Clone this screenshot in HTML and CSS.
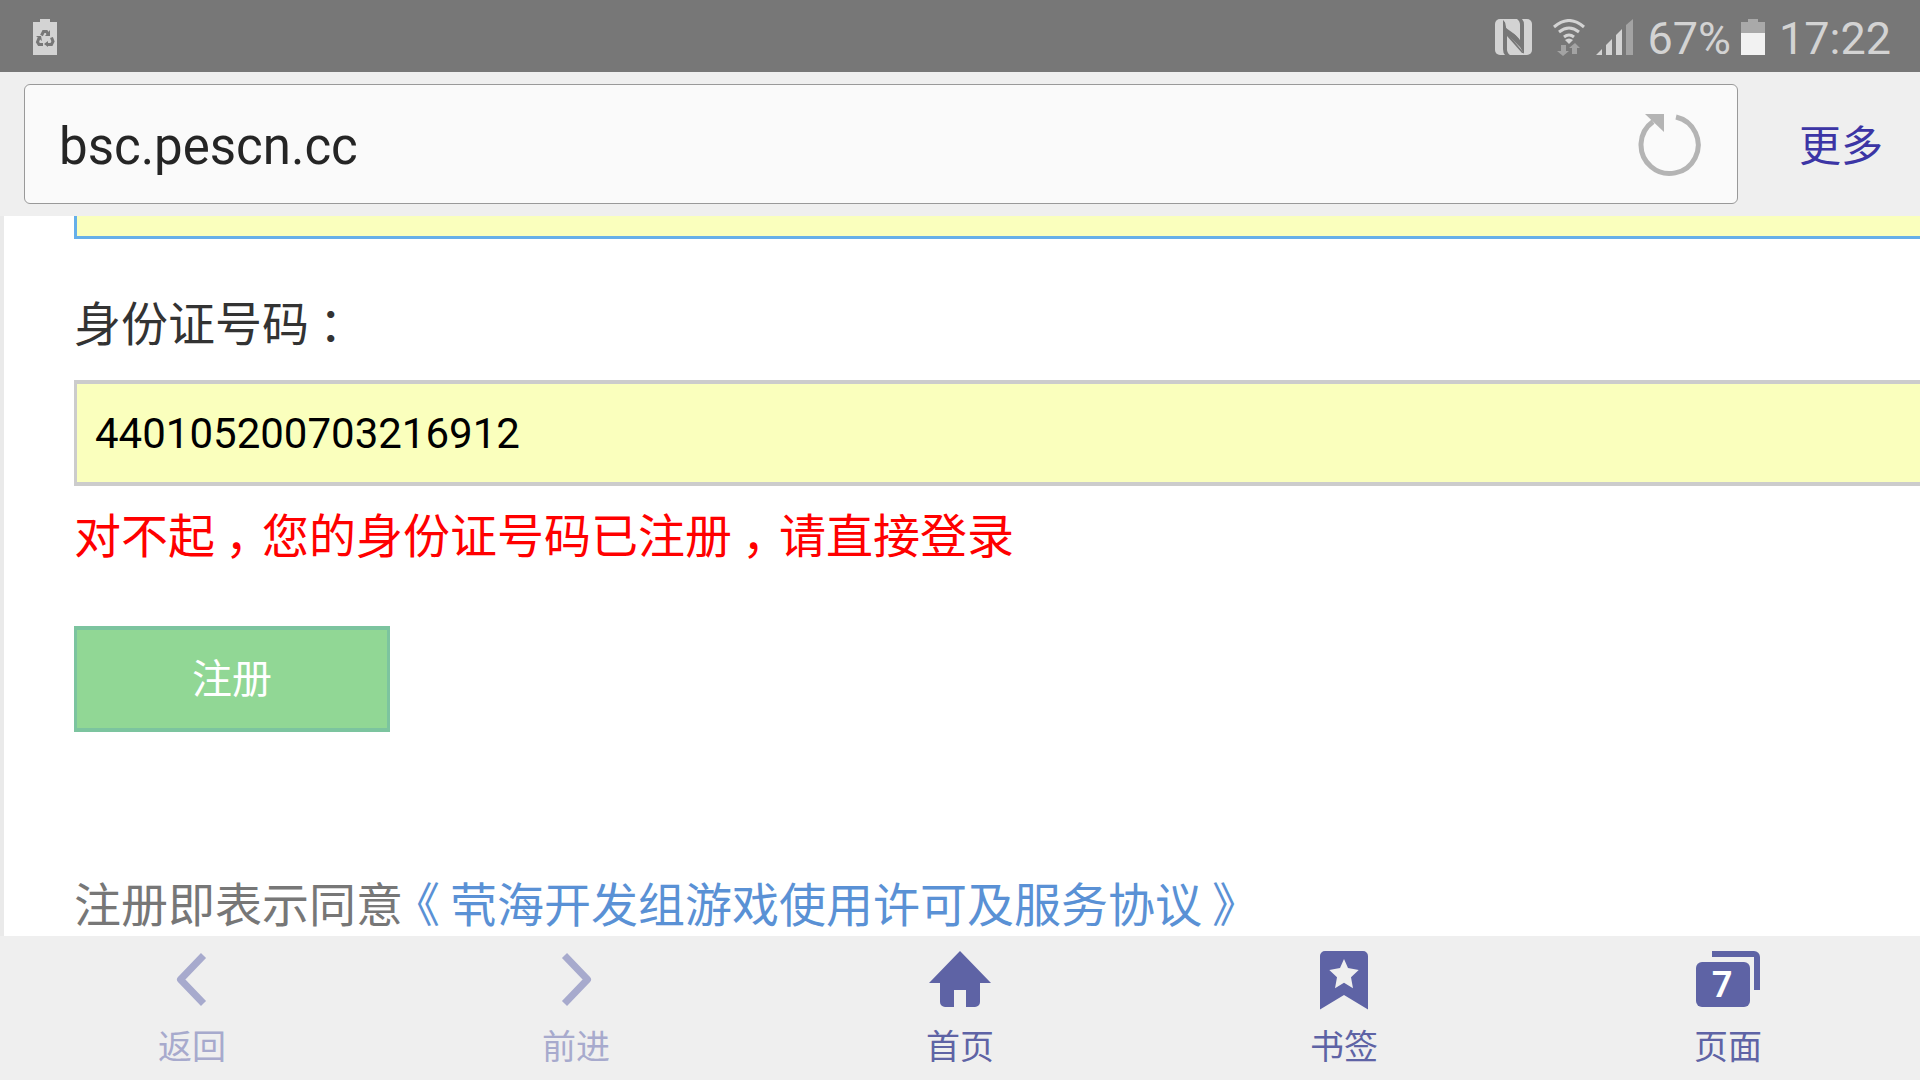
FILE: index.html
```html
<!DOCTYPE html>
<html lang="zh-CN">
<head>
    <meta charset="UTF-8">
    <meta name="viewport" content="width=device-width, initial-scale=1.0">
    <title>bsc.pescn.cc</title>
    <link rel="stylesheet" href="styles.css">
</head>
<body>
    <div class="status-bar">
        <svg class="status-icon" width="24" height="36" viewBox="0 0 24 36">
            <path fill="#d3d3d3" d="M7 0h10v3h7v33H0V3h7z"/>
            <g fill="none" stroke="#777" stroke-width="3">
                <path d="M8.500 16.500L10.500 12.500h3l2 3M6 19l-1.500 4 1.500 2.500h4M18.500 18.500l1.500 4-1.500 3h-4"/>
            </g>
            <path fill="#777" d="M17 11v6h-5zM3 17h5l1 5zM15 22v6l-4-3z"/>
        </svg>
        <div class="status-right">
            <svg class="nfc" width="37" height="36" viewBox="0 0 37 36">
                <rect width="37" height="36" rx="5" fill="#d3d3d3"/>
                <path fill="#777" d="M8 1v29q0 4 2 6h5q-3-2-3-6V15l13 13 4 7V6q0-4-2-6h-5q3 2 3 6v15z"/>
                <path fill="#d3d3d3" d="M10 2h10q5 0 5 6v11L11 9zM12 17l15 17H17q-5 0-5-6z"/>
                <path fill="#777" d="M8 1l4 10 12 9v3L12 13v4l15 17h2L13 15l-3-5z"/>
            </svg>
            <svg class="wifi" width="32" height="37" viewBox="0 0 32 37">
                <g fill="none" stroke="#d3d3d3" stroke-width="3">
                    <path d="M1 8q15-13 30 0M6 13q10-8 20 0M11 18q5-4 10 0"/>
                </g>
                <path fill="#d3d3d3" d="M12 21q4-3 8 0l-4 4z"/>
                <path fill="#a3a3a3" d="M8 26h5v6h3l-6 5-6-5h4zM19 35v-6h-3l6-5 5 5h-3v6z"/>
            </svg>
            <svg class="signal" width="37" height="36" viewBox="0 0 37 36">
                <path fill="#d3d3d3" d="M0 36l6-6v6zM10 26l6-6v16h-6zM20 16l6-6v26h-6z"/>
                <path fill="#a3a3a3" d="M30 6l7-6v36h-7z"/>
            </svg>
            <span class="percent">67%</span>
            <svg class="battery" width="24" height="36" viewBox="0 0 24 36">
                <path fill="#a9a9a9" d="M7 0h10v3h7v11H0V3h7z"/>
                <path fill="#f2f2f2" d="M0 14h24v22H0z"/>
            </svg>
            <span>17:22</span>
        </div>
    </div>

    <div class="toolbar">
        <div class="address">
            <input type="text" class="address-input" aria-label="网址" value="bsc.pescn.cc">
            <button class="reload" aria-label="刷新">
                <svg width="64" height="64" viewBox="0 0 64 64">
                    <path fill="none" stroke="#b4b4b4" stroke-width="5" d="M38 4A28.6 28.6 0 1 1 15 8.6"/>
                    <path fill="#b4b4b4" d="M7 1h19v18z"/>
                </svg>
            </button>
        </div>
        <button class="more">更多</button>
    </div>

    <main class="page">
        <form class="register">
            <input type="text" class="field focused" aria-label="姓名">
            <label class="field-label" for="idCard">身份证号码<span class="punct">：</span></label>
            <input type="text" class="field" id="idCard" value="440105200703216912">
            <p class="error">对不起<span class="punct">，</span>您的身份证号码已注册<span class="punct">，</span>请直接登录</p>
            <button type="button" class="submit">注册</button>
            <p class="agreement">注册即表示同意<a href="#"><span class="punct-open">《</span>茕海开发组游戏使用许可及服务协议<span class="punct">》</span></a></p>
        </form>
    </main>

    <nav class="nav">
        <button class="nav-item" disabled>
            <svg width="64" height="60" viewBox="0 0 64 60">
                <path fill="none" stroke="currentColor" stroke-width="7" stroke-linejoin="round" d="M43.5 5.5L20.5 29.5l23 24"/>
            </svg>
            返回
        </button>
        <button class="nav-item" disabled>
            <svg width="64" height="60" viewBox="0 0 64 60">
                <path fill="none" stroke="currentColor" stroke-width="7" stroke-linejoin="round" d="M20.5 5.5l23 24-23 24"/>
            </svg>
            前进
        </button>
        <button class="nav-item">
            <svg width="64" height="60" viewBox="0 0 64 60">
                <path fill="currentColor" d="M32 1l31 32H52v19a5 5 0 0 1-5 5h-9V40H26v17h-9a5 5 0 0 1-5-5V33H1z"/>
            </svg>
            首页
        </button>
        <button class="nav-item">
            <svg width="64" height="60" viewBox="0 0 64 60">
                <path fill="currentColor" d="M13 1h38a5 5 0 0 1 5 5v53.500L32 45 8 59.500V6a5 5 0 0 1 5-5z"/>
                <path fill="#efefef" d="M32 9l4 9 10.700 2-7.700 7.300 2 11-9-5.600-9 5.600 2-11-7.700-7.300L28 18z"/>
            </svg>
            书签
        </button>
        <button class="nav-item">
            <svg width="64" height="60" viewBox="0 0 64 60">
                <rect y="12" width="54" height="45" rx="6" fill="currentColor"/>
                <path fill="currentColor" d="M16 1h42a6 6 0 0 1 6 6v33h-6V7H16z"/>
                <text class="tab-count" x="26" y="47" text-anchor="middle">7</text>
            </svg>
            页面
        </button>
    </nav>
</body>
</html>
```

FILE: styles.css
```css
* {
    box-sizing: border-box;
}
body {
    margin: 0;
    height: 100vh;
    display: flex;
    flex-direction: column;
    overflow: hidden;
    background: #fff;
    font-family: Roboto, "Noto Sans CJK SC", sans-serif;
}
button {
    padding: 0;
    border: none;
    background: none;
    font-family: inherit;
}
input {
    font-family: inherit;
}
p {
    margin: 0;
}
svg {
    display: block;
}

.status-bar {
    flex: none;
    display: flex;
    justify-content: space-between;
    align-items: center;
    height: 72px;
    padding: 2px 29px 0 33px;
    background: #777;
    color: #d3d3d3;
    font-size: 45px;
}
.status-right {
    display: flex;
    align-items: center;
}
.status-right span {
    padding-top: 2px;
}
.nfc {
    margin-right: 21px;
}
.wifi {
    margin-right: 11px;
}
.signal {
    margin-right: 14px;
}
.battery {
    margin: 0 14px 0 10px;
}

.toolbar {
    flex: none;
    display: flex;
    align-items: center;
    height: 144px;
    padding: 0 37px 0 24px;
    background: #efefef;
}
.address {
    flex: 1;
    display: flex;
    align-items: center;
    height: 120px;
    padding: 2px 35px 0 34px;
    border: 1px solid #999;
    border-radius: 6px;
    background: #fafafa;
}
.address-input {
    flex: 1;
    padding: 2px 0 0;
    border: none;
    outline: none;
    background: none;
    color: #252525;
    font-size: 51px;
}
.more {
    margin-left: 61px;
    padding-bottom: 4px;
    color: #3c35a5;
    font-size: 42px;
}

.page {
    flex: 1;
    min-height: 0;
    overflow: hidden;
    padding-left: 70px;
    border-left: 4px solid #eaeaea;
}
/* scrolled down: the first field is half under the toolbar */
.register {
    margin: -83px -80px 0 0;
}
.field {
    display: block;
    width: 100%;
    height: 106px;
    padding: 0 18px;
    border: solid #ccc;
    border-width: 4px 3px;
    background: #faffbd;
    color: #000;
    font-size: 42px;
}
.focused {
    border-color: #66afe9;
    border-width: 3px;
}
.field-label,
.error {
    display: block;
    font-size: 47px;
    line-height: 70px;
}
.field-label {
    margin: 51px 0 20px;
    color: #333;
}
.error {
    margin: 16px 0 54px;
    color: #f00;
}
/* full-width marks sit in the middle of their cell */
.punct {
    margin: 0 -10px 0 10px;
}
.punct-open {
    margin: 0 10px 0 -10px;
}
.submit {
    display: block;
    width: 316px;
    height: 106px;
    padding-bottom: 6px;
    border: solid #7cc49f;
    border-width: 4px 3px;
    background: #91d795;
    color: #fff;
    font-size: 40px;
}
.agreement {
    margin-top: 144px;
    color: #777;
    font-size: 47px;
    line-height: 60px;
}
.agreement a {
    color: #5a91d5;
    text-decoration: none;
}

.nav {
    flex: none;
    display: grid;
    grid-template-columns: repeat(5, 1fr);
    height: 144px;
    background: #efefef;
}
.nav-item {
    display: flex;
    flex-direction: column;
    align-items: center;
    gap: 15px;
    padding-top: 14px;
    color: #5e63a5;
    font-size: 34px;
    line-height: 44px;
}
.nav-item:disabled {
    color: #a7aacd;
}
.tab-count {
    fill: #fff;
    font-family: "Noto Sans", sans-serif;
    font-size: 36px;
    font-weight: 600;
}
```
